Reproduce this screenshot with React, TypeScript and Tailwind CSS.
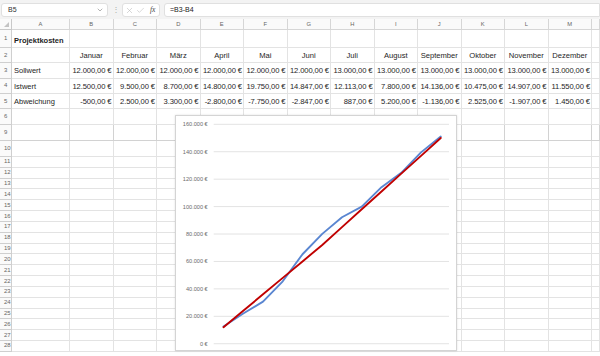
import React from "react";
import { ChevronDown, X, Check } from "lucide-react";

const COLS = "grid grid-cols-[12px_58px_repeat(12,43.5px)_1fr]";
const letters = ["A", "B", "C", "D", "E", "F", "G", "H", "I", "J", "K", "L", "M", ""];
const months = ["Januar", "Februar", "März", "April", "Mai", "Juni", "Juli", "August", "September", "Oktober", "November", "Dezember"];
const soll = ["12.000,00 €", "12.000,00 €", "12.000,00 €", "12.000,00 €", "12.000,00 €", "12.000,00 €", "13.000,00 €", "13.000,00 €", "13.000,00 €", "13.000,00 €", "13.000,00 €", "13.000,00 €"];
const ist = ["12.500,00 €", "9.500,00 €", "8.700,00 €", "14.800,00 €", "19.750,00 €", "14.847,00 €", "12.113,00 €", "7.800,00 €", "14.136,00 €", "10.475,00 €", "14.907,00 €", "11.550,00 €"];
const abw = ["-500,00 €", "2.500,00 €", "3.300,00 €", "-2.800,00 €", "-7.750,00 €", "-2.847,00 €", "887,00 €", "5.200,00 €", "-1.136,00 €", "2.525,00 €", "-1.907,00 €", "1.450,00 €"];

const sollCum = [12000, 24000, 36000, 48000, 60000, 72000, 85000, 98000, 111000, 124000, 137000, 150000];
const istCum = [12500, 22000, 30700, 45500, 65250, 80097, 92210, 100010, 114146, 124621, 139528, 151078];

const rowHeights: { label: string; cls: string }[] = [
  { label: "1", cls: "h-[18px]" },
  { label: "2", cls: "h-[15px]" },
  { label: "3", cls: "h-[15.5px]" },
  { label: "4", cls: "h-[15.8px]" },
  { label: "5", cls: "h-[14.7px]" },
  { label: "6", cls: "h-[16px]" },
  { label: "9", cls: "h-[16px]" },
  { label: "10", cls: "h-[16px]" },
  ...Array.from({ length: 18 }, (_, i) => ({ label: String(11 + i), cls: "h-[10.83px]" })),
];

function rowContent(label: string): { a: React.ReactNode; cells: string[]; kind: "num" | "head" | "none"; bold?: boolean } {
  switch (label) {
    case "1":
      return { a: "Projektkosten", cells: [], kind: "none", bold: true };
    case "2":
      return { a: "", cells: months, kind: "head" };
    case "3":
      return { a: "Sollwert", cells: soll, kind: "num" };
    case "4":
      return { a: "Istwert", cells: ist, kind: "num" };
    case "5":
      return { a: "Abweichung", cells: abw, kind: "num" };
    default:
      return { a: "", cells: [], kind: "none" };
  }
}

function Chart() {
  const gy = (k: number) => 8.3 + k * 27.43;
  const x = (i: number) => 47.5 + i * 19.75;
  const y = (v: number) => 227.7 - v * 0.00137125;
  const labels = ["160.000 €", "140.000 €", "120.000 €", "100.000 €", "80.000 €", "60.000 €", "40.000 €", "20.000 €", "0 €"];
  const pts = (arr: number[]) => arr.map((v, i) => `${x(i).toFixed(2)},${y(v).toFixed(2)}`).join(" ");
  return (
    <div className="absolute left-[175px] top-[115px] w-[282px] h-[236px] bg-white border border-[#d4d4d4] shadow-[0_0_2px_rgba(0,0,0,0.12)]">
      <svg width="282" height="236" className="block">
        {labels.map((l, k) => (
          <g key={l}>
            <line x1={37.7} x2={273} y1={gy(k)} y2={gy(k)} stroke="#e3e3e3" strokeWidth={1} />
            <text x={31.7} y={gy(k) + 2} textAnchor="end" fontSize="5.6" fill="#6b6b6b" fontFamily="Liberation Sans, Arial, sans-serif">
              {l}
            </text>
          </g>
        ))}
        <polyline points={pts(istCum)} fill="none" stroke="#5a86d1" strokeWidth={1.9} strokeLinejoin="round" strokeLinecap="round" />
        <polyline points={pts(sollCum)} fill="none" stroke="#c00000" strokeWidth={1.9} strokeLinejoin="round" strokeLinecap="round" />
      </svg>
    </div>
  );
}

export default function App() {
  return (
    <div className="relative w-[600px] h-[356px] overflow-hidden bg-white text-[#1e1e1e] font-['Liberation_Sans',Arial,sans-serif]">
      {/* formula bar */}
      <div className="flex items-center h-[19px] bg-[#f3f3f3] pt-[1px] pl-[1px] gap-[4px]">
        <div className="flex items-center justify-between w-[107px] h-[14px] bg-white rounded-[3px] border border-[#e0e0e0] pl-[6px] pr-[3px]">
          <span className="text-[7px] text-[#333]">B5</span>
          <ChevronDown size={8} strokeWidth={1.5} className="text-[#666]" />
        </div>
        <span className="text-[8px] text-[#aaa] leading-none w-[6px] text-center">⋮</span>
        <div className="flex items-center w-[38px] h-[14px] bg-white rounded-[3px] border border-[#e0e0e0] px-[2px] gap-[2px]">
          <X size={9} strokeWidth={1.2} className="text-[#aaa]" />
          <Check size={9} strokeWidth={1.2} className="text-[#aaa]" />
          <span className="ml-[3px] text-[7.5px] italic font-['Liberation_Serif',serif] text-[#444]">fx</span>
        </div>
        <div className="flex items-center flex-1 h-[14px] bg-white rounded-l-[3px] border border-[#e0e0e0] pl-[5px]">
          <span className="text-[7px] text-[#222]">=B3-B4</span>
        </div>
      </div>

      {/* column headers */}
      <div className={`${COLS} h-[11px] bg-[#fafafa]`}>
        <div className="relative border-r border-b border-[#c9c9c9]">
          <div className="absolute right-[2px] bottom-[2px] w-0 h-0 border-l-[5px] border-l-transparent border-b-[5px] border-b-[#c4c4c4]" />
        </div>
        {letters.map((l, i) => (
          <div key={i} className="flex items-center justify-center border-r border-b border-[#d6d6d6] text-[5.8px] text-[#666]">
            {l}
          </div>
        ))}
      </div>

      {/* rows */}
      {rowHeights.map((r) => {
        const c = rowContent(r.label);
        const line = r.label === "9" ? "border-[#d2d2d2]" : "border-[#e3e3e3]";
        return (
          <div key={r.label} className={`${COLS} ${r.cls}`}>
            <div className="flex items-center pl-[4px] border-r border-b border-[#cfcfcf] bg-[#fafafa] text-[6px] text-[#666]">
              {r.label}
            </div>
            <div className={`flex items-end pl-[2px] pb-[1px] border-r border-b ${line} text-[7.5px] whitespace-nowrap ${c.bold ? "font-bold" : ""}`}>
              {c.a}
            </div>
            {Array.from({ length: 13 }, (_, i) => (
              <div
                key={i}
                className={`flex items-end pb-[1px] border-r border-b ${line} text-[7.6px] whitespace-nowrap overflow-visible ${
                  c.kind === "num" ? "justify-end pr-[1px] tracking-[-0.1px]" : "justify-center"
                }`}
              >
                {c.cells[i] ?? ""}
              </div>
            ))}
          </div>
        );
      })}

      <Chart />
    </div>
  );
}
